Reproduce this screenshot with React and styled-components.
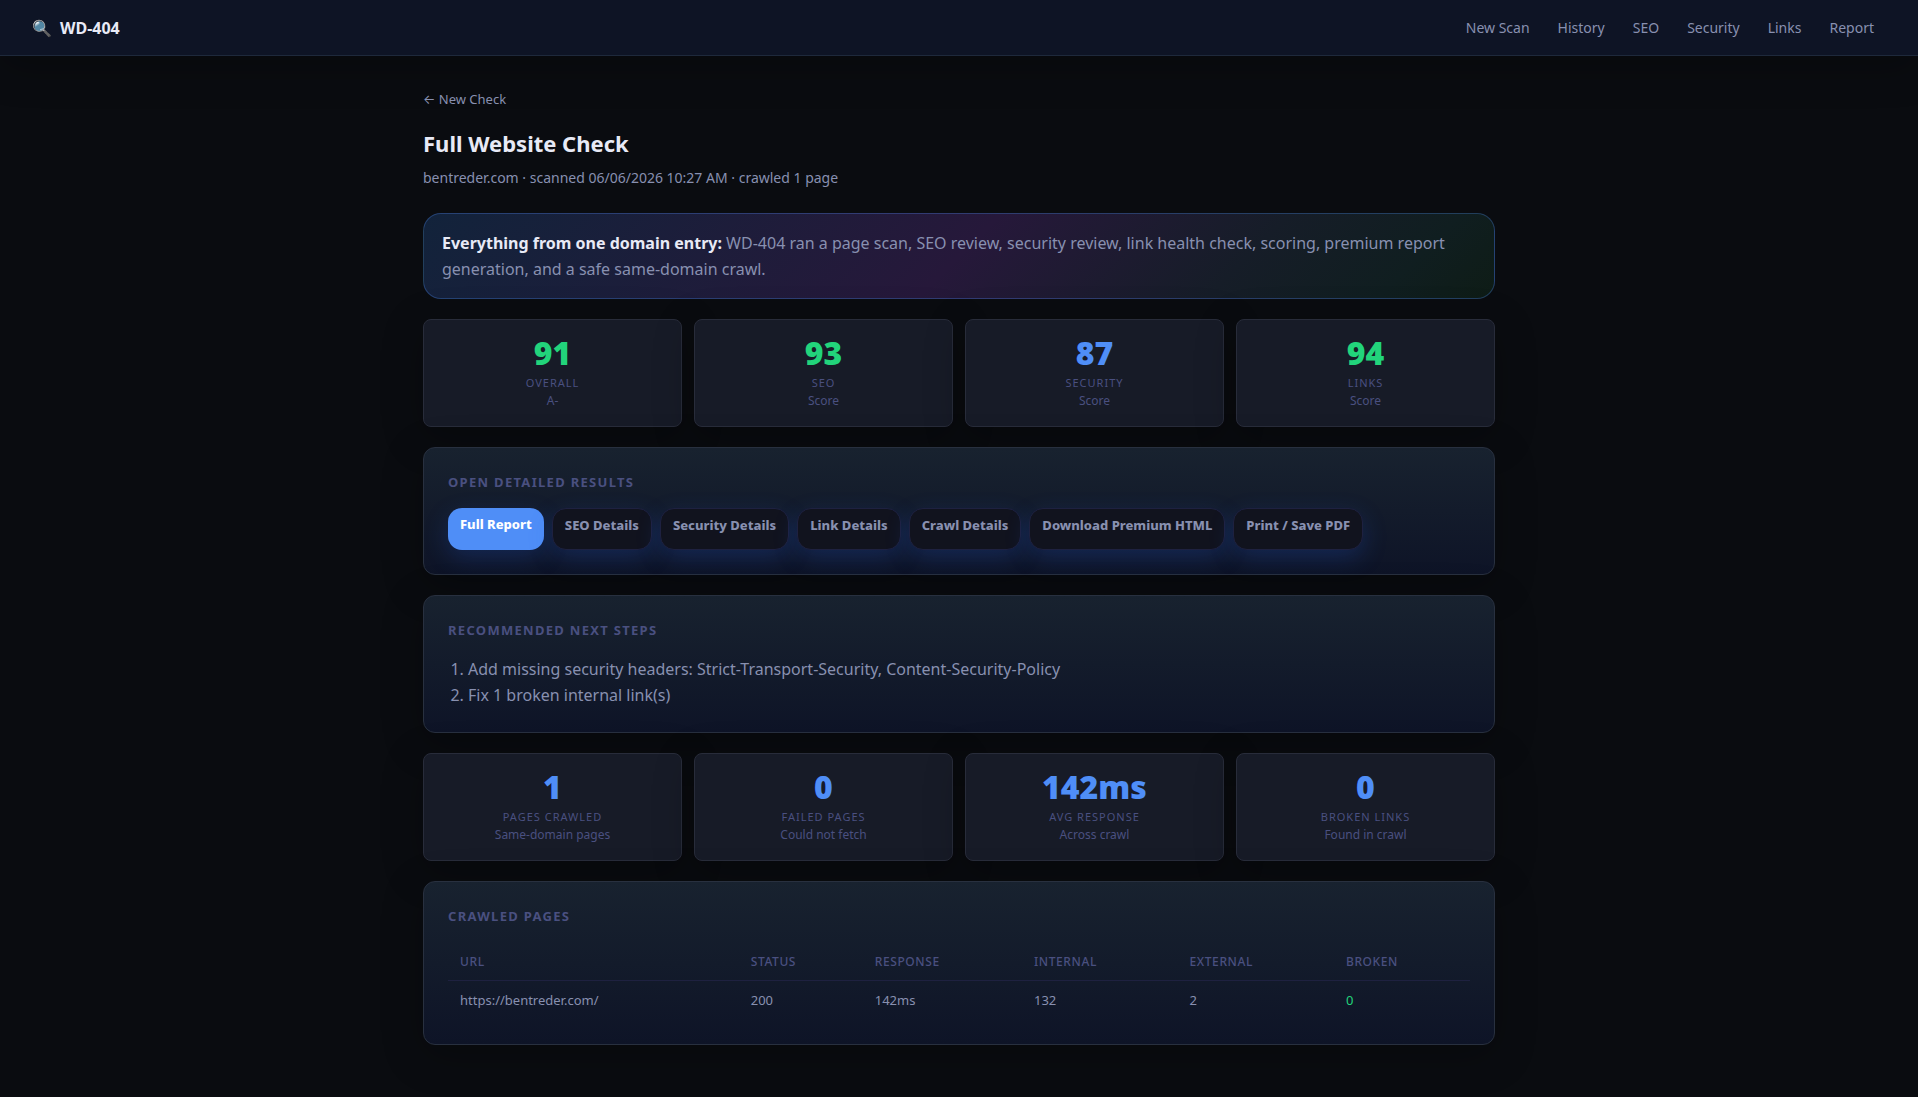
import React from 'react';
import styled, { createGlobalStyle } from 'styled-components';

const GlobalStyle = createGlobalStyle`
  * {
    box-sizing: border-box;
  }

  body {
    margin: 0;
    min-height: 100vh;
    background: #0a0c10;
    color: #e8eaf6;
    font-family: 'Noto Sans', Inter, sans-serif;
    font-size: 16px;
    line-height: 26px;
  }

  a {
    color: inherit;
    text-decoration: none;
  }
`;

const Header = styled.header`
  display: flex;
  align-items: center;
  justify-content: space-between;
  height: 56px;
  padding: 0 32px;
  background: #0e1425;
  border-bottom: 1px solid #1e293b;
  box-shadow: 0 10px 40px rgba(0, 0, 0, 0.25);
`;

const Brand = styled.a`
  display: flex;
  align-items: center;
  gap: 8px;
  font-weight: 700;
`;

const Nav = styled.nav`
  display: flex;
  gap: 4px;
`;

const NavLink = styled.a`
  padding: 6px 12px;
  color: #8890b0;
  font-size: 14px;
  line-height: 22px;
`;

const Main = styled.main`
  max-width: 1120px;
  margin: 0 auto;
  padding: 32px 24px 52px;
`;

const BackLink = styled.a`
  display: block;
  width: fit-content;
  margin-bottom: 14px;
  color: #8890b0;
  font-size: 13px;
  line-height: 22px;
`;

const Title = styled.h1`
  margin: 0 0 4px;
  font-size: 22px;
  font-weight: 700;
  line-height: 38px;
`;

const Subtitle = styled.p`
  margin: 0 0 24px;
  color: #8890b0;
  font-size: 14px;
  line-height: 23px;
`;

const Sections = styled.div`
  display: flex;
  flex-direction: column;
  gap: 20px;
`;

const Banner = styled.div`
  padding: 16px 18px;
  border: 1px solid rgba(79, 142, 247, 0.3);
  border-radius: 18px;
  background: linear-gradient(135deg, #12233b, #26183a 50%, #161d28 75%, #101e20 90%, #0e1c16);
  color: #8890b0;

  strong {
    color: #e8eaf6;
  }
`;

const StatGrid = styled.div`
  display: grid;
  grid-template-columns: repeat(4, 1fr);
  gap: 12px;
`;

const Stat = styled.div`
  padding: 17px 16px 16px;
  border: 1px solid #282c3a;
  border-radius: 8px;
  background: #171b27;
  box-shadow: 0 10px 40px rgba(0, 0, 0, 0.25);
  text-align: center;
`;

const StatValue = styled.div`
  color: ${({ $good }) => ($good ? '#22d47b' : '#4f8ef7')};
  font-size: 32px;
  font-weight: 900;
  line-height: 32px;
`;

const StatLabel = styled.div`
  margin-top: 5px;
  color: #4a5080;
  font-size: 11px;
  letter-spacing: 1px;
  line-height: 17px;
  text-transform: uppercase;
`;

const StatNote = styled.div`
  color: #4a5080;
  font-size: 12px;
  line-height: 19px;
`;

const Panel = styled.section`
  padding: 24px;
  border: 1px solid #28303f;
  border-radius: 12px;
  background: linear-gradient(180deg, #18222f, #0e1427);
  box-shadow: 0 10px 40px rgba(0, 0, 0, 0.25);
`;

const PanelTitle = styled.h2`
  margin: 0 0 16px;
  color: #4a5080;
  font-size: 13px;
  font-weight: 700;
  letter-spacing: 0.1em;
  line-height: 20px;
  text-transform: uppercase;
`;

const Actions = styled.div`
  display: flex;
  flex-wrap: wrap;
  gap: 8px;
`;

const Action = styled.a`
  min-height: 42px;
  padding: 6px 12px;
  border: ${({ $primary }) => ($primary ? 'none' : '1px solid #1e2140')};
  border-radius: 14px;
  background: ${({ $primary }) => ($primary ? '#4f8ef7' : '#11131e')};
  box-shadow: 0 8px 24px rgba(37, 99, 235, 0.22);
  color: ${({ $primary }) => ($primary ? '#fff' : '#8890b0')};
  font-size: 13px;
  font-weight: 800;
  line-height: 20px;
`;

const Steps = styled.ol`
  margin: 0;
  padding-left: 20px;
  color: #8890b0;
`;

const Table = styled.table`
  width: 100%;
  border-collapse: collapse;
  text-align: left;
`;

const HeadCell = styled.th`
  padding: 11px 12px 9px;
  border-bottom: 1px solid #1e2140;
  color: #4a5080;
  font-size: 12px;
  font-weight: 500;
  letter-spacing: 0.05em;
  line-height: 18px;
  text-transform: uppercase;
`;

const Cell = styled.td`
  padding: 9px 12px;
  color: ${({ $good }) => ($good ? '#22d47b' : '#8890b0')};
  font-size: 13px;
  line-height: 21px;
`;

const navLinks = ['New Scan', 'History', 'SEO', 'Security', 'Links', 'Report'];

const scores = [
  { value: '91', label: 'Overall', note: 'A-', good: true },
  { value: '93', label: 'SEO', note: 'Score', good: true },
  { value: '87', label: 'Security', note: 'Score' },
  { value: '94', label: 'Links', note: 'Score', good: true },
];

const crawlStats = [
  { value: '1', label: 'Pages Crawled', note: 'Same-domain pages' },
  { value: '0', label: 'Failed Pages', note: 'Could not fetch' },
  { value: '142ms', label: 'Avg Response', note: 'Across crawl' },
  { value: '0', label: 'Broken Links', note: 'Found in crawl' },
];

const actions = [
  'Full Report',
  'SEO Details',
  'Security Details',
  'Link Details',
  'Crawl Details',
  'Download Premium HTML',
  'Print / Save PDF',
];

const steps = [
  'Add missing security headers: Strict-Transport-Security, Content-Security-Policy',
  'Fix 1 broken internal link(s)',
];

const columns = ['URL', 'Status', 'Response', 'Internal', 'External', 'Broken'];

const pages = [
  { url: 'https://bentreder.com/', status: 200, response: '142ms', internal: 132, external: 2, broken: 0 },
];

function Stats({ items }) {
  return (
    <StatGrid>
      {items.map((item) => (
        <Stat key={item.label}>
          <StatValue $good={item.good}>{item.value}</StatValue>
          <StatLabel>{item.label}</StatLabel>
          <StatNote>{item.note}</StatNote>
        </Stat>
      ))}
    </StatGrid>
  );
}

function App() {
  return (
    <>
      <GlobalStyle />
      <Header>
        <Brand href="#">
          <span>🔍</span>
          <span>WD-404</span>
        </Brand>
        <Nav>
          {navLinks.map((link) => (
            <NavLink key={link} href="#">{link}</NavLink>
          ))}
        </Nav>
      </Header>
      <Main>
        <BackLink href="#">← New Check</BackLink>
        <Title>Full Website Check</Title>
        <Subtitle>bentreder.com · scanned 06/06/2026 10:27 AM · crawled 1 page</Subtitle>
        <Sections>
          <Banner>
            <strong>Everything from one domain entry:</strong> WD-404 ran a page scan, SEO review,
            security review, link health check, scoring, premium report generation, and a safe
            same-domain crawl.
          </Banner>
          <Stats items={scores} />
          <Panel>
            <PanelTitle>Open Detailed Results</PanelTitle>
            <Actions>
              {actions.map((action, i) => (
                <Action key={action} href="#" $primary={i === 0}>{action}</Action>
              ))}
            </Actions>
          </Panel>
          <Panel>
            <PanelTitle>Recommended Next Steps</PanelTitle>
            <Steps>
              {steps.map((step) => (
                <li key={step}>{step}</li>
              ))}
            </Steps>
          </Panel>
          <Stats items={crawlStats} />
          <Panel>
            <PanelTitle>Crawled Pages</PanelTitle>
            <Table>
              <thead>
                <tr>
                  {columns.map((column) => (
                    <HeadCell key={column} scope="col">{column}</HeadCell>
                  ))}
                </tr>
              </thead>
              <tbody>
                {pages.map((page) => (
                  <tr key={page.url}>
                    <Cell>{page.url}</Cell>
                    <Cell>{page.status}</Cell>
                    <Cell>{page.response}</Cell>
                    <Cell>{page.internal}</Cell>
                    <Cell>{page.external}</Cell>
                    <Cell $good={page.broken === 0}>{page.broken}</Cell>
                  </tr>
                ))}
              </tbody>
            </Table>
          </Panel>
        </Sections>
      </Main>
    </>
  );
}

export default App;
